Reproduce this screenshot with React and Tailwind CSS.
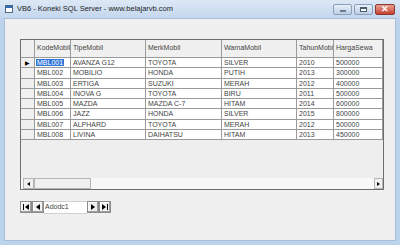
import React from 'react';

const columns = [
  { key: 'kode', label: 'KodeMobil', w: 'w-[36px] shrink-0' },
  { key: 'tipe', label: 'TipeMobil', w: 'w-[75px] shrink-0' },
  { key: 'merk', label: 'MerkMobil', w: 'w-[76px] shrink-0' },
  { key: 'warna', label: 'WarnaMobil', w: 'w-[75px] shrink-0' },
  { key: 'tahun', label: 'TahunMobil', w: 'w-[37px] shrink-0' },
  { key: 'harga', label: 'HargaSewa', w: 'flex-1' },
];

const rows = [
  { kode: 'MBL001', tipe: 'AVANZA G12', merk: 'TOYOTA', warna: 'SILVER', tahun: '2010', harga: '500000' },
  { kode: 'MBL002', tipe: 'MOBILIO', merk: 'HONDA', warna: 'PUTIH', tahun: '2013', harga: '300000' },
  { kode: 'MBL003', tipe: 'ERTIGA', merk: 'SUZUKI', warna: 'MERAH', tahun: '2012', harga: '400000' },
  { kode: 'MBL004', tipe: 'INOVA G', merk: 'TOYOTA', warna: 'BIRU', tahun: '2011', harga: '500000' },
  { kode: 'MBL005', tipe: 'MAZDA', merk: 'MAZDA C-7', warna: 'HITAM', tahun: '2014', harga: '600000' },
  { kode: 'MBL006', tipe: 'JAZZ', merk: 'HONDA', warna: 'SILVER', tahun: '2015', harga: '800000' },
  { kode: 'MBL007', tipe: 'ALPHARD', merk: 'TOYOTA', warna: 'MERAH', tahun: '2012', harga: '500000' },
  { kode: 'MBL008', tipe: 'LIVINA', merk: 'DAIHATSU', warna: 'HITAM', tahun: '2013', harga: '450000' },
];

function TitleButtons() {
  return (
    <div className="flex gap-[2px] pr-[5px] pt-[4px]">
      <div className="w-[19px] h-[11px] rounded-[2px] border border-[#8a9fb9] bg-gradient-to-b from-[#e9f0f8] to-[#bccde3] flex items-center justify-center">
        <div className="w-[6px] h-[2px] bg-white border border-[#6b7d93] mt-[3px]" />
      </div>
      <div className="w-[19px] h-[11px] rounded-[2px] border border-[#8a9fb9] bg-gradient-to-b from-[#e9f0f8] to-[#bccde3] flex items-center justify-center">
        <div className="w-[7px] h-[5px] border border-[#4d5d70] border-t-2 bg-white" />
      </div>
      <div className="w-[20px] h-[11px] rounded-[2px] border border-[#8a3a30] bg-gradient-to-b from-[#e8a093] to-[#c33d2b] flex items-center justify-center">
        <span className="text-white text-[9px] font-bold leading-none">✕</span>
      </div>
    </div>
  );
}

function Grid() {
  return (
    <div className="w-[364px] h-[151px] border border-[#6d6d6d] bg-[#eeeeee] flex flex-col text-[7px] text-[#444]">
      <div className="flex-1 overflow-hidden">
        <div className="flex h-[18px] bg-[#f0f0f0] border-b border-[#9a9a9a]">
          <div className="w-[14px] border-r border-[#9a9a9a] shrink-0" />
          {columns.map((c) => (
            <div key={c.key} className={`${c.w} border-r border-[#9a9a9a] px-[2px] flex items-center overflow-hidden whitespace-nowrap`}>
              {c.label}
            </div>
          ))}
        </div>
        {rows.map((r, i) => (
          <div key={r.kode} className="flex h-[10.25px] bg-white border-b border-[#9a9a9a]">
            <div className="w-[14px] shrink-0 border-r border-[#9a9a9a] bg-[#f0f0f0] flex items-center justify-center">
              {i === 0 && <span className="text-black text-[6px] leading-none">▶</span>}
            </div>
            {columns.map((c) => (
              <div key={c.key} className={`${c.w} border-r border-[#9a9a9a] px-[2px] flex items-center overflow-hidden whitespace-nowrap leading-none`}>
                {i === 0 && c.key === 'kode' ? (
                  <span className="bg-[#3175d8] text-white px-[1px] -ml-[1px]">{r[c.key]}</span>
                ) : (
                  r[c.key]
                )}
              </div>
            ))}
          </div>
        ))}
      </div>
      <div className="flex h-[11px] pl-[2px] bg-[#f8f8f8]">
        <div className="w-[11px] border border-[#b5b5b5] bg-[#f0f0f0] flex items-center justify-center">
          <div className="w-0 h-0 border-y-[2px] border-y-transparent border-r-[3px] border-r-black" />
        </div>
        <div className="w-[57px] border border-[#b5b5b5] bg-[#f0f0f0]" />
        <div className="flex-1" />
        <div className="w-[9px] border border-[#b5b5b5] bg-[#f0f0f0] flex items-center justify-center">
          <div className="w-0 h-0 border-y-[2px] border-y-transparent border-l-[3px] border-l-black" />
        </div>
      </div>
    </div>
  );
}

function NavBtn({ dir, bar }) {
  return (
    <div className="w-[12px] h-[12px] border border-[#8c8c8c] bg-[#f0f0f0] flex items-center justify-center gap-[1px] shadow-[inset_-1px_-1px_0_#a0a0a0,inset_1px_1px_0_#ffffff]">
      {bar && dir === 'l' && <div className="w-[1px] h-[6px] bg-black" />}
      {dir === 'l' ? (
        <div className="w-0 h-0 border-y-[3px] border-y-transparent border-r-[4px] border-r-black" />
      ) : (
        <div className="w-0 h-0 border-y-[3px] border-y-transparent border-l-[4px] border-l-black" />
      )}
      {bar && dir === 'r' && <div className="w-[1px] h-[6px] bg-black" />}
    </div>
  );
}

function Adodc() {
  return (
    <div className="flex items-stretch h-[13px] text-[7px] text-[#444]">
      <NavBtn dir="l" bar />
      <NavBtn dir="l" />
      <div className="w-[43px] bg-white flex items-center px-[1px] border-y border-[#d0d0d0]">Adodc1</div>
      <NavBtn dir="r" />
      <NavBtn dir="r" bar />
    </div>
  );
}

export default function App() {
  return (
    <div className="w-[400px] h-[245px] bg-[#bcd3ec] flex flex-col overflow-hidden" style={{ fontFamily: '"Liberation Sans", Arial, sans-serif' }}>
      <div className="h-[18px] flex items-start justify-between bg-gradient-to-b from-[#dde8f5] to-[#c4d7ee]">
        <div className="flex items-center gap-[4px] pl-[5px] pt-[5px]">
          <div className="w-[8px] h-[8px] border border-[#4f6a85] bg-white relative">
            <div className="h-[2px] bg-[#2f6db7]" />
          </div>
          <span className="text-[7.5px] text-[#1e1e1e] leading-none">VB6 - Koneki SQL Server - www.belajarvb.com</span>
        </div>
        <TitleButtons />
      </div>
      <div className="flex-1 mx-[4px] mb-[4px] bg-[#f0f0f0] border border-[#a9bdd4] pl-[15px] pt-[20px]">
        <Grid />
        <div className="mt-[11px]">
          <Adodc />
        </div>
      </div>
    </div>
  );
}
